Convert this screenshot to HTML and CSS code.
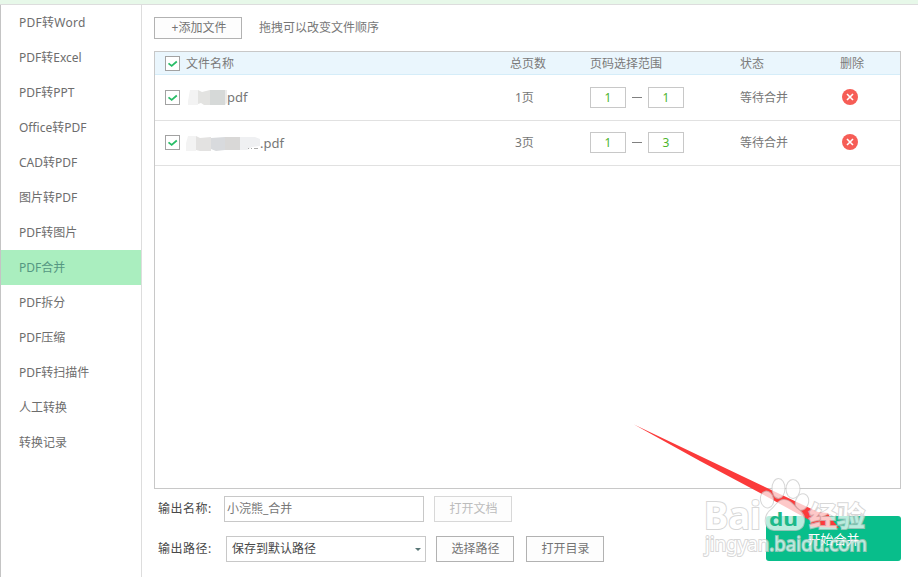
FILE: index.html
```html
<!DOCTYPE html>
<html lang="zh-CN">
<head>
<meta charset="utf-8">
<title>PDF合并</title>
<link rel="stylesheet" href="styles.css">
</head>
<body>
<div class="app">
  <div class="topbar"></div>
  <div class="body">
    <nav class="sidebar">
      <a class="item wide">PDF转Word</a>
      <a class="item">PDF转Excel</a>
      <a class="item">PDF转PPT</a>
      <a class="item">Office转PDF</a>
      <a class="item">CAD转PDF</a>
      <a class="item">图片转PDF</a>
      <a class="item">PDF转图片</a>
      <a class="item active">PDF合并</a>
      <a class="item">PDF拆分</a>
      <a class="item">PDF压缩</a>
      <a class="item">PDF转扫描件</a>
      <a class="item">人工转换</a>
      <a class="item">转换记录</a>
    </nav>
    <main class="main">
      <div class="toolbar">
        <button class="btn add">+添加文件</button>
        <span>拖拽可以改变文件顺序</span>
      </div>
      <section class="table">
        <div class="row head">
          <span class="check"><svg viewBox="0 0 15 15"><path d="M3.500 7.300 6.700 10 11.800 5.500"/></svg></span>
          <span class="name">文件名称</span>
          <span class="pages">总页数</span>
          <span class="range">页码选择范围</span>
          <span class="status">状态</span>
          <span>删除</span>
        </div>
        <div class="row">
          <span class="check"><svg viewBox="0 0 15 15"><path d="M3.500 7.300 6.700 10 11.800 5.500"/></svg></span>
          <span class="name"><svg class="smudge" width="41" height="18" viewBox="0 0 41 18"><path fill="#f3f3f3" d="M4 2h8v15H2v-4z"/><path fill="#e3e3e1" d="M12 2l4 2 8-2v15h-6l-3-2-3 1z"/><path fill="#d6d9d8" d="M24 2h15v15H24z"/><path fill="#ebebeb" d="M39 2h3v12l-3 3z"/></svg>pdf</span>
          <span class="pages count">1页</span>
          <span class="range"><b class="num">1</b><i class="dash"></i><b class="num">1</b></span>
          <span class="status">等待合并</span>
          <svg class="del" viewBox="0 0 16 16"><circle cx="8" cy="8" r="8"/><path d="M5 5l6 6M11 5l-6 6"/></svg>
        </div>
        <div class="row">
          <span class="check"><svg viewBox="0 0 15 15"><path d="M3.500 7.300 6.700 10 11.800 5.500"/></svg></span>
          <span class="name"><svg class="smudge" width="74" height="18" viewBox="0 0 74 18"><path fill="#f3f3f3" d="M2 2h8v15H-1v-4z"/><path fill="#e3e2e1" d="M10 2l4 2 11-1v14H14l-4-1z"/><path fill="#d8dadd" d="M25 4l14-1v13l-9 1-5-2z"/><path fill="#d9d8d7" d="M39 3h15v13H39z"/><path fill="#eff0f2" d="M54 3h15l5 2v7l-8 1-5 3h-7z"/><path stroke="#aaa" d="M62 14.500h1M65 14.500h1M68 14.500h4"/></svg>.pdf</span>
          <span class="pages count">3页</span>
          <span class="range"><b class="num">1</b><i class="dash"></i><b class="num">3</b></span>
          <span class="status">等待合并</span>
          <svg class="del" viewBox="0 0 16 16"><circle cx="8" cy="8" r="8"/><path d="M5 5l6 6M11 5l-6 6"/></svg>
        </div>
      </section>
      <footer class="footer">
        <div class="fields">
          <div class="field">
            <label>输出名称:</label>
            <div class="box">小浣熊_合并</div>
            <button class="btn disabled">打开文档</button>
          </div>
          <div class="field path">
            <label>输出路径:</label>
            <div class="box select">保存到默认路径<i class="caret"></i></div>
            <button class="btn">选择路径</button>
            <button class="btn second">打开目录</button>
          </div>
        </div>
        <button class="start">开始合并</button>
      </footer>
    </main>
  </div>
  <svg class="overlay" viewBox="0 0 918 577">
    <path fill="#fb3a3a" d="M634 424.500 700 456 765 487 818 512 828 513 830 517 839 528 810 526.500 811 521 762 494 700 461z"/>
    <g class="mark">
      <ellipse cx="778.500" cy="488.500" rx="6" ry="9.500"/>
      <ellipse cx="793" cy="489" rx="6.500" ry="9"/>
      <ellipse cx="767" cy="499.500" rx="6" ry="8" transform="rotate(-12 767 499.500)"/>
      <ellipse cx="802" cy="502" rx="6" ry="8" transform="rotate(18 802 502)"/>
      <path d="M784 500c-6 0-8 6-13 10-7 5-8 19 3 20h22c10-1 10-14 4-19-6-4-9-11-16-11z"/>
      <text class="logo" x="704" y="529" textLength="57" lengthAdjust="spacingAndGlyphs">Bai</text>
      <text class="cn" x="809" y="527" textLength="56" lengthAdjust="spacingAndGlyphs">经验</text>
      <text class="url" x="705" y="551" textLength="162" lengthAdjust="spacingAndGlyphs">jingyan.baidu.com</text>
    </g>
    <text class="du" x="769" y="525.500" textLength="29" lengthAdjust="spacingAndGlyphs">du</text>
  </svg>
</div>
</body>
</html>
```
FILE: styles.css
```css
* { box-sizing: border-box; }
body { margin: 0; background: #fff; overflow: hidden; }
.app {
  position: relative;
  width: 918px;
  height: 577px;
  display: flex;
  flex-direction: column;
  font: 12px/18px "Noto Sans", "Noto Sans CJK SC", sans-serif;
  color: #777;
}
.topbar { height: 5px; background: #e7f8e9; border-bottom: 1px solid #ddd; }
.body { flex: 1; display: flex; border-left: 1px solid #c4c4c4; }
.sidebar { width: 141px; border-right: 1px solid #ddd; }
.item {
  display: block;
  height: 35px;
  padding-left: 18px;
  line-height: 35px;
  color: #6d6d6d;
}
.wide { letter-spacing: .25px; }
.active { background: #aaeebf; color: #559782; }
.main { flex: 1; display: flex; flex-direction: column; padding: 12px 17px 0 12px; }
.btn {
  width: 78px;
  height: 26px;
  padding: 0 0 0 1px;
  border: 1px solid #b2b2b2;
  background: #fdfdfd;
  color: #747474;
  font: inherit;
}
.toolbar { display: flex; align-items: center; gap: 17px; height: 22px; }
.add { width: 88px; height: 22px; line-height: 18px; padding-left: 2px; }
.table { height: 438px; margin-top: 12px; border: 1px solid #c8c8c8; }
.row {
  display: flex;
  align-items: center;
  height: 45px;
  padding: 0 0 1px 10px;
  border-bottom: 1px solid #e1e1e1;
}
.row:nth-child(2) { height: 46px; }
.head { height: 23px; padding-bottom: 0; line-height: 20px; background: #eaf6fd; border-color: #d5edf9; color: #7a7a7a; }
.head > span:not(.check) { padding-top: 2px; }
.check {
  width: 15px;
  height: 15px;
  margin-right: 6px;
  border: 1px solid #a2a2a2;
  background: #fff;
}
.check svg { display: block; width: 15px; height: 15px; margin: -1px; fill: none; stroke: #27bd66; stroke-width: 1.7; }
.name { display: flex; align-items: center; width: 324px; }
.row:not(.head) .name { font-size: 13px; }
.smudge { display: block; }
.pages { width: 80px; }
.count { padding-left: 5px; }
.range { display: flex; align-items: center; width: 150px; }
.status { width: 100px; }
.row:nth-child(2) .count, .row:nth-child(2) .status { padding-top: 2px; }
.row:nth-child(3) .del { margin-bottom: 1px; }
.num {
  width: 36px;
  height: 21px;
  border: 1px solid #c8c8c8;
  line-height: 20px;
  text-align: center;
  font-weight: 400;
  color: #4cb52b;
}
.dash { width: 10px; height: 1px; margin: 0 6px; background: #808080; }
.del { width: 16px; height: 16px; margin-left: 2px; fill: #f65d56; }
.del path { stroke: #fff; stroke-width: 1.6; }
.footer { display: flex; justify-content: space-between; padding: 7px 0 0 4px; }
.fields { display: flex; flex-direction: column; gap: 14px; }
.field { display: flex; align-items: center; height: 26px; }
.field label { width: 66px; color: #484848; letter-spacing: .5px; }
.path label { width: 68px; }
.box { width: 200px; height: 26px; margin-right: 10px; padding-left: 2px; border: 1px solid #c8c8c8; line-height: 24px; }
.select { display: flex; align-items: center; justify-content: space-between; padding: 0 4px 0 5px; color: #484848; }
.caret { border: 3px solid transparent; border-top: 3px solid #597676; border-bottom: 0; }
.disabled { border-color: #d8d8d8; color: #bcbcbc; }
.second { margin-left: 12px; }
.start { width: 135px; height: 45px; margin-top: 20px; border: 0; border-radius: 3px; background: #08be8b; color: #fff; font: inherit; font-size: 13px; }
.overlay { position: absolute; inset: 0; width: 918px; height: 577px; pointer-events: none; }
.mark { opacity: .72; fill: #fff; stroke: #c8c8c8; stroke-width: 2; paint-order: stroke; }
.logo { font: 700 38px "Noto Sans", sans-serif; }
.cn { font: 700 28px "Noto Sans CJK SC", sans-serif; }
.url { font: 400 20px "Noto Sans", sans-serif; }
.du { font: 700 18px "Noto Sans", sans-serif; fill: #1bb98a; }
```
